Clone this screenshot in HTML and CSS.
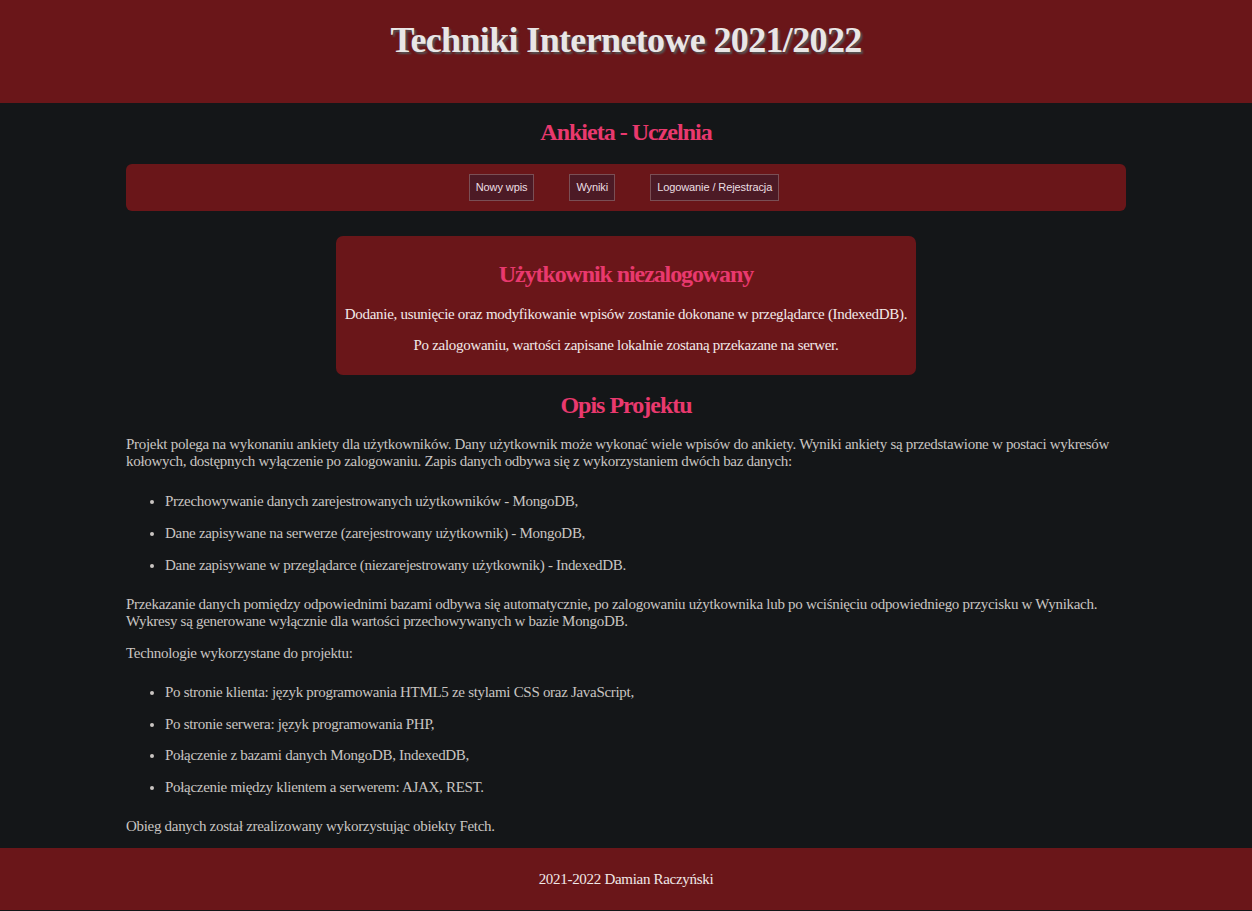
FILE: index.html
```html
<!DOCTYPE html>
<html lang="pl">
<head>
<meta charset="utf-8">
<title>Techniki Internetowe</title>
<link rel="stylesheet" href="styles.css">
</head>
<body>
<header class="top">
  <h1 class="top-title">Techniki Internetowe 2021/2022</h1>
</header>
<main class="main">
  <h2 class="section-title app-title">Ankieta - Uczelnia</h2>
  <nav class="nav">
    <button class="nav-btn">Nowy wpis</button>
    <button class="nav-btn">Wyniki</button>
    <button class="nav-btn">Logowanie / Rejestracja</button>
  </nav>
  <section class="info">
    <h3 class="info-title">Użytkownik niezalogowany</h3>
    <p class="info-text">Dodanie, usunięcie oraz modyfikowanie wpisów zostanie dokonane w przeglądarce (IndexedDB).</p>
    <p class="info-text">Po zalogowaniu, wartości zapisane lokalnie zostaną przekazane na serwer.</p>
  </section>
  <section class="desc">
    <h2 class="section-title desc-title">Opis Projektu</h2>
    <p class="text">Projekt polega na wykonaniu ankiety dla użytkowników. Dany użytkownik może wykonać wiele wpisów do ankiety. Wyniki ankiety są przedstawione w postaci wykresów kołowych, dostępnych wyłączenie po zalogowaniu. Zapis danych odbywa się z wykorzystaniem dwóch baz danych:</p>
    <ul class="list">
      <li>Przechowywanie danych zarejestrowanych użytkowników - MongoDB,</li>
      <li>Dane zapisywane na serwerze (zarejestrowany użytkownik) - MongoDB,</li>
      <li>Dane zapisywane w przeglądarce (niezarejestrowany użytkownik) - IndexedDB.</li>
    </ul>
    <p class="text">Przekazanie danych pomiędzy odpowiednimi bazami odbywa się automatycznie, po zalogowaniu użytkownika lub po wciśnięciu odpowiedniego przycisku w Wynikach. Wykresy są generowane wyłącznie dla wartości przechowywanych w bazie MongoDB.</p>
    <p class="text">Technologie wykorzystane do projektu:</p>
    <ul class="list list-last">
      <li>Po stronie klienta: język programowania HTML5 ze stylami CSS oraz JavaScript,</li>
      <li>Po stronie serwera: język programowania PHP,</li>
      <li>Połączenie z bazami danych MongoDB, IndexedDB,</li>
      <li>Połączenie między klientem a serwerem: AJAX, REST.</li>
    </ul>
    <p class="text text-last">Obieg danych został zrealizowany wykorzystując obiekty Fetch.</p>
  </section>
</main>
<footer class="foot">
  <p class="foot-text">2021-2022 Damian Raczyński</p>
</footer>
</body>
</html>
```

FILE: styles.css
```css
* { box-sizing: border-box; }
html, body {
  margin: 0;
  padding: 0;
}
body {
  background: #141618;
  color: #c9c5c2;
  font-family: "Liberation Serif", "Times New Roman", serif;
  font-size: 15px;
  line-height: 17px;
  letter-spacing: -0.3px;
}
.top {
  background: #6a1619;
  height: 103px;
  padding-top: 19px;
}
.top-title {
  margin: 0;
  text-align: center;
  font-size: 36px;
  line-height: 42px;
  font-weight: bold;
  letter-spacing: -0.65px;
  color: #e9e6e6;
  text-shadow: 2px 2px 2px #555;
}
.main {
  width: 1000px;
  margin: 0 auto;
}
.section-title {
  text-align: center;
  color: #e9396e;
  font-size: 24px;
  line-height: 28px;
  font-weight: bold;
  letter-spacing: -1px;
  margin: 0;
}
.app-title {
  padding-top: 15px;
  padding-bottom: 18px;
}
.nav {
  background: #6a1619;
  border-radius: 6px;
  height: 47px;
  display: flex;
  justify-content: center;
  align-items: center;
  gap: 35px;
  padding-right: 4px;
}
.nav-btn {
  font-family: "Liberation Sans", Arial, sans-serif;
  font-size: 11px;
  line-height: 13px;
  letter-spacing: -0.1px;
  color: #ebdfe2;
  background: #4c1a25;
  border: 1px solid #7a4f55;
  padding: 6px 6px;
  height: 27px;
  margin: 0;
}
.info {
  width: 580px;
  margin: 25px auto 0;
  background: #6a1619;
  border-radius: 7px;
  padding: 25px 0 21px;
  text-align: center;
}
.info-title {
  margin: 0 0 19px;
  color: #e9396e;
  font-size: 24px;
  line-height: 26px;
  letter-spacing: -1.1px;
}
.info-text {
  margin: 0;
  color: #f2e9e9;
}
.info-text + .info-text {
  margin-top: 14px;
}
.desc-title {
  padding-top: 16px;
  padding-bottom: 2px;
}
.text {
  margin: 15px 0;
}
.list {
  margin: 15px 0;
  padding-left: 39px;
}
.list li {
  padding: 7.5px 0;
}
.list-last li {
  padding: 7.3px 0;
}
.list-last {
  margin-bottom: 14px;
}
.text-last {
  margin-bottom: 13px;
}
.foot {
  background: #6a1619;
  height: 62px;
  display: flex;
  align-items: center;
  justify-content: center;
}
.foot-text {
  margin: 0;
  color: #f0e8e8;
}
```
